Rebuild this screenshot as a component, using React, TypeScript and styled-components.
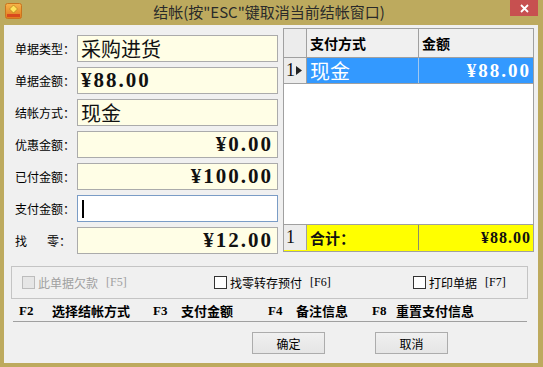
import React from "react";
import styled, { createGlobalStyle } from "styled-components";

const GlobalStyle = createGlobalStyle`
  html, body {
    margin: 0;
    padding: 0;
    background: #bdaa5e;
  }
  body {
    font-family: "Noto Sans CJK SC", "Noto Sans", sans-serif;
    font-size: 12px;
    color: #000;
  }
`;

const Window = styled.div`
  width: 543px;
  height: 367px;
  background: #bdaa5e;
  display: flex;
  flex-direction: column;
  box-sizing: border-box;
  overflow: hidden;
`;

const TitleBar = styled.div`
  height: 25px;
  display: flex;
  align-items: flex-start;
  flex-shrink: 0;
`;

const AppIcon = styled.div`
  width: 17px;
  height: 16px;
  margin: 3px 0 0 5px;
`;

const Title = styled.div`
  flex: 1;
  text-align: center;
  font-size: 15px;
  line-height: 24px;
  color: #2a2a2a;
  padding-left: 6px;
`;

const CloseButton = styled.div`
  width: 28px;
  height: 16px;
  margin-right: 5px;
  background: #c75050;
  display: flex;
  align-items: center;
  justify-content: center;
`;

const Client = styled.div`
  flex: 1;
  margin: 0 5px 4px 4px;
  background: #f0f0f0;
  display: flex;
  flex-direction: column;
  box-sizing: border-box;
`;

const TopSection = styled.div`
  display: flex;
  padding-top: 3px;
`;

const Form = styled.div`
  width: 279px;
  padding-top: 7px;
  display: flex;
  flex-direction: column;
  gap: 5px;
  box-sizing: border-box;
`;

const FieldRow = styled.div`
  display: flex;
  align-items: center;
  height: 27px;
  padding-left: 11px;
`;

const Label = styled.div<{ $spread?: boolean }>`
  width: 62px;
  font-size: 12px;
  white-space: pre;
  display: flex;
  justify-content: ${(p) => (p.$spread ? "space-between" : "flex-start")};
  padding-right: ${(p) => (p.$spread ? "6px" : "0")};
  box-sizing: border-box;
`;

const Field = styled.div<{ $align?: "left" | "right"; $active?: boolean }>`
  width: 201px;
  height: 27px;
  box-sizing: border-box;
  border: 1px solid ${(p) => (p.$active ? "#7a9cc6" : "#ababab")};
  background: ${(p) => (p.$active ? "#ffffff" : "#fffee6")};
  display: flex;
  align-items: center;
  justify-content: ${(p) => (p.$align === "right" ? "flex-end" : "flex-start")};
  padding: 0 4px 0 3px;
`;

const BigText = styled.span`
  font-size: 20px;
  line-height: 24px;
  color: #111;
`;

const Money = styled.span<{ $size?: number; $color?: string; $spacing?: number }>`
  font-family: "Liberation Serif", "DejaVu Serif", serif;
  font-weight: bold;
  font-size: ${(p) => p.$size ?? 21}px;
  letter-spacing: ${(p) => p.$spacing ?? 2}px;
  color: ${(p) => p.$color ?? "#111"};
  line-height: 1;
`;

const Caret = styled.span`
  width: 2px;
  height: 18px;
  background: #000;
  margin-left: 1px;
`;

const Grid = styled.div`
  width: 251px;
  height: 224px;
  box-sizing: border-box;
  border: 1px solid #a0a0a0;
  background: #fff;
  display: flex;
  flex-direction: column;
`;

const GridRow = styled.div<{ $height: number; $bg: string; $line: string }>`
  display: grid;
  grid-template-columns: 23px 112px 1fr;
  height: ${(p) => p.$height}px;
  background: ${(p) => p.$bg};
  border-bottom: 1px solid ${(p) => p.$line};
  box-sizing: border-box;
  flex-shrink: 0;
`;

const GridBody = styled.div`
  flex: 1;
  background: #fff;
  border-bottom: 1px solid #a0a0a0;
`;

const Cell = styled.div<{ $align?: "left" | "right"; $line: string }>`
  border-right: 1px solid ${(p) => p.$line};
  display: flex;
  align-items: center;
  justify-content: ${(p) => (p.$align === "right" ? "flex-end" : "flex-start")};
  padding: 0 2px 0 3px;
  box-sizing: border-box;
  &:last-child {
    border-right: none;
  }
`;

const IndicatorCell = styled.div`
  background: #ececec;
  border-right: 1px solid #a0a0a0;
  display: flex;
  align-items: center;
  padding-left: 2px;
  gap: 1px;
  font-family: "Liberation Serif", serif;
  font-size: 18px;
  color: #111;
`;

const HeaderText = styled.span`
  font-size: 14px;
  font-weight: bold;
  color: #000;
`;

const RowText = styled.span<{ $color: string; $size: number; $bold?: boolean }>`
  font-size: ${(p) => p.$size}px;
  color: ${(p) => p.$color};
  font-weight: ${(p) => (p.$bold ? "bold" : "normal")};
  line-height: 1.2;
`;

const GroupBox = styled.div`
  margin: 12px 0 0 7px;
  width: 517px;
  height: 33px;
  border: 1px solid #c4c4c4;
  box-sizing: border-box;
  display: flex;
  align-items: center;
  padding-left: 10px;
`;

const Option = styled.label<{ $width?: number; $disabled?: boolean }>`
  display: flex;
  align-items: center;
  gap: 3px;
  width: ${(p) => (p.$width ? `${p.$width}px` : "auto")};
  color: ${(p) => (p.$disabled ? "#a0a0a0" : "#000")};
  font-size: 12px;
`;

const CheckBox = styled.span<{ $disabled?: boolean }>`
  width: 13px;
  height: 13px;
  box-sizing: border-box;
  border: 1px solid ${(p) => (p.$disabled ? "#bcbcbc" : "#333")};
  background: ${(p) => (p.$disabled ? "#e6e6e6" : "#fff")};
`;

const KeyHint = styled.span`
  font-family: "Liberation Serif", serif;
  font-size: 12px;
  margin-left: 5px;
`;

const ShortcutRow = styled.div`
  display: flex;
  align-items: center;
  height: 21px;
  padding-left: 15px;
  margin-top: 1px;
`;

const Shortcut = styled.div<{ $width?: number }>`
  display: flex;
  align-items: center;
  width: ${(p) => (p.$width ? `${p.$width}px` : "auto")};
  font-weight: bold;
  font-size: 13px;
`;

const FKey = styled.span<{ $width: number }>`
  width: ${(p) => p.$width}px;
  font-family: "Liberation Serif", serif;
  font-weight: bold;
  font-size: 13px;
`;

const Separator = styled.div`
  margin: 0 0 0 9px;
  width: 514px;
  height: 1px;
  background: #a0a0a0;
`;

const ButtonRow = styled.div`
  display: flex;
  gap: 50px;
  padding-left: 248px;
  margin-top: 10px;
`;

const Button = styled.div`
  width: 73px;
  height: 22px;
  box-sizing: border-box;
  border: 1px solid #acacac;
  background: linear-gradient(#f0f0f0, #e5e5e5);
  display: flex;
  align-items: center;
  justify-content: center;
  font-size: 12px;
`;

const Triangle = () => (
  <svg width="6" height="9" viewBox="0 0 6 9">
    <polygon points="0,0 6,4.5 0,9" fill="#222" />
  </svg>
);

const fields = [
  { label: "单据类型：", value: "采购进货", kind: "text" },
  { label: "单据金额：", value: "¥88.00", kind: "money-left" },
  { label: "结帐方式：", value: "现金", kind: "text" },
  { label: "优惠金额：", value: "¥0.00", kind: "money" },
  { label: "已付金额：", value: "¥100.00", kind: "money" },
  { label: "支付金额：", value: "", kind: "input" },
];

export default function App() {
  return (
    <>
      <GlobalStyle />
      <Window>
        <TitleBar>
          <AppIcon>
            <svg width="17" height="16" viewBox="0 0 17 16">
              <defs>
                <linearGradient id="ig" x1="0" y1="0" x2="0" y2="1">
                  <stop offset="0" stopColor="#f7b54a" />
                  <stop offset="1" stopColor="#e0781e" />
                </linearGradient>
              </defs>
              <rect x="0.5" y="0.5" width="16" height="15" rx="2" fill="url(#ig)" stroke="#c9741e" />
              <polygon points="8.5,2 12.5,6 8.5,10 4.5,6" fill="#ffe25a" stroke="#b8861a" strokeWidth="0.8" />
              <rect x="2" y="11" width="13" height="3" fill="#d94a1e" />
            </svg>
          </AppIcon>
          <Title>结帐(按"ESC"键取消当前结帐窗口)</Title>
          <CloseButton>
            <svg width="9" height="9" viewBox="0 0 9 9">
              <path d="M1 1 L8 8 M8 1 L1 8" stroke="#fff" strokeWidth="1.8" />
            </svg>
          </CloseButton>
        </TitleBar>
        <Client>
          <TopSection>
            <Form>
              {fields.map((f) => (
                <FieldRow key={f.label}>
                  <Label>{f.label}</Label>
                  {f.kind === "text" && (
                    <Field>
                      <BigText>{f.value}</BigText>
                    </Field>
                  )}
                  {f.kind === "money-left" && (
                    <Field>
                      <Money>{f.value}</Money>
                    </Field>
                  )}
                  {f.kind === "money" && (
                    <Field $align="right">
                      <Money>{f.value}</Money>
                    </Field>
                  )}
                  {f.kind === "input" && (
                    <Field $active>
                      <Caret />
                    </Field>
                  )}
                </FieldRow>
              ))}
              <FieldRow>
                <Label $spread>
                  <span>找</span>
                  <span>零：</span>
                </Label>
                <Field $align="right">
                  <Money>¥12.00</Money>
                </Field>
              </FieldRow>
            </Form>
            <Grid>
              <GridRow $height={29} $bg="#f0f0f0" $line="#a0a0a0">
                <IndicatorCell />
                <Cell $line="#a0a0a0">
                  <HeaderText>支付方式</HeaderText>
                </Cell>
                <Cell $line="#a0a0a0">
                  <HeaderText>金额</HeaderText>
                </Cell>
              </GridRow>
              <GridRow $height={26} $bg="#3399ff" $line="#a0a0a0">
                <IndicatorCell>
                  1<Triangle />
                </IndicatorCell>
                <Cell $line="#a0c8f0">
                  <RowText $color="#fff" $size={20}>现金</RowText>
                </Cell>
                <Cell $align="right" $line="#a0c8f0">
                  <Money $size={19} $color="#fff">¥88.00</Money>
                </Cell>
              </GridRow>
              <GridBody />
              <GridRow $height={26} $bg="#ffff00" $line="#ffff00">
                <IndicatorCell>1</IndicatorCell>
                <Cell $line="#8c8c6a">
                  <RowText $color="#111" $size={15} $bold>合计：</RowText>
                </Cell>
                <Cell $align="right" $line="#8c8c6a">
                  <Money $size={16} $spacing={1}>¥88.00</Money>
                </Cell>
              </GridRow>
            </Grid>
          </TopSection>
          <GroupBox>
            <Option $width={192} $disabled>
              <CheckBox $disabled />
              此单据欠款<KeyHint>[F5]</KeyHint>
            </Option>
            <Option $width={199}>
              <CheckBox />
              找零转存预付<KeyHint>[F6]</KeyHint>
            </Option>
            <Option>
              <CheckBox />
              打印单据<KeyHint>[F7]</KeyHint>
            </Option>
          </GroupBox>
          <ShortcutRow>
            <Shortcut $width={134}>
              <FKey $width={33}>F2</FKey>选择结帐方式
            </Shortcut>
            <Shortcut $width={115}>
              <FKey $width={28}>F3</FKey>支付金额
            </Shortcut>
            <Shortcut $width={104}>
              <FKey $width={28}>F4</FKey>备注信息
            </Shortcut>
            <Shortcut>
              <FKey $width={24}>F8</FKey>重置支付信息
            </Shortcut>
          </ShortcutRow>
          <Separator />
          <ButtonRow>
            <Button>确定</Button>
            <Button>取消</Button>
          </ButtonRow>
        </Client>
      </Window>
    </>
  );
}
